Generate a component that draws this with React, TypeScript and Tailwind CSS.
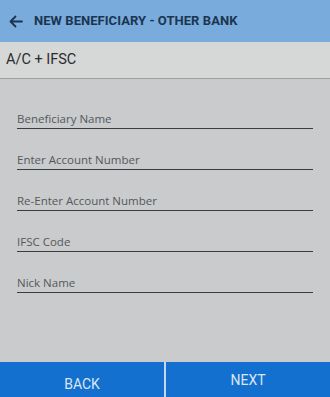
import React from "react";

const fields = [
  "Beneficiary Name",
  "Enter Account Number",
  "Re-Enter Account Number",
  "IFSC Code",
  "Nick Name",
];

export default function App() {
  return (
    <div
      className="w-[330px] h-[397px] flex flex-col bg-[#c9cbcc] overflow-hidden"
      style={{ fontFamily: "Roboto, 'Open Sans', sans-serif" }}
    >
      <div className="h-[42px] bg-[#79abdc] flex items-center pl-[9px] gap-[11px] shrink-0">
        <svg width="14" height="13" viewBox="0 0 14 13" fill="none" stroke="#1b3550" strokeWidth="1.8" strokeLinecap="round" strokeLinejoin="round">
          <path d="M13 6.5H1.5M6.5 1.5L1.5 6.5L6.5 11.5" />
        </svg>
        <span className="text-[13px] font-bold text-[#1b3550] tracking-[0.05px]">
          NEW BENEFICIARY - OTHER BANK
        </span>
      </div>
      <div className="h-[37px] bg-[#d6d7d7] border-b border-[#9c9fa2] flex items-center pl-[6px] shrink-0">
        <span className="text-[14.5px] text-[#2a2c2e]">A/C + IFSC</span>
      </div>
      <div className="flex-1 flex flex-col px-[17px] pt-[29px] gap-[20px]">
        {fields.map((f) => (
          <div key={f} className="border-b-[1.5px] border-[#3a3c3e] pb-[1px] h-[21px] flex items-end">
            <span
              className="text-[11.5px] text-[#55585b] leading-none pb-[3px]"
              style={{ fontFamily: "'Open Sans', sans-serif" }}
            >
              {f}
            </span>
          </div>
        ))}
      </div>
      <div className="h-[35px] flex shrink-0">
        <div className="flex-1 bg-[#1470cf] flex items-center justify-center text-[14px] text-[#dbe6f3] pt-[9px]">
          BACK
        </div>
        <div className="w-[2px] bg-[#c6d6e6]" />
        <div className="flex-1 bg-[#1470cf] flex items-center justify-center text-[14px] text-[#dbe6f3] pt-[2px]">
          NEXT
        </div>
      </div>
    </div>
  );
}
